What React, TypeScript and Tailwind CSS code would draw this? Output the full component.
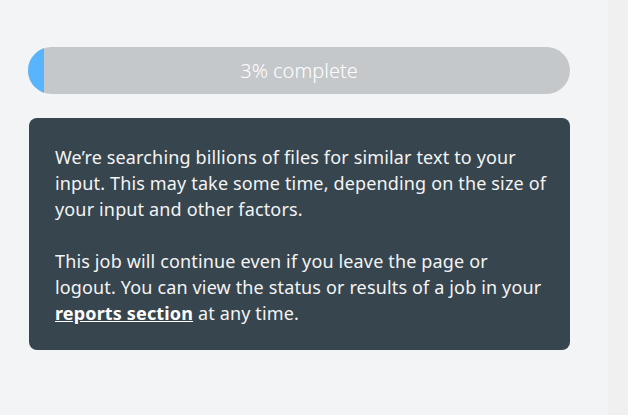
export default function App() {
  const pct = 3;
  return (
    <div className="flex h-[415px] w-[628px] bg-[#f0f0f1]" style={{ fontFamily: "'Noto Sans', Lato, sans-serif" }}>
      <div className="h-full w-[608px] bg-[#f3f4f6] pl-[28px] pr-[38px] pt-[47px]">
        <div className="relative flex h-[47px] w-[542px] items-center justify-center overflow-hidden rounded-full bg-[#c5c8ca]">
          <div className="absolute left-0 top-0 h-full bg-[#57b4fd]" style={{ width: `${pct}%` }} />
          <span className="relative text-[20px] font-light text-white">{pct}% complete</span>
        </div>
        <div className="mt-[24px] ml-px w-[541px] rounded-lg bg-[#37454e] px-[26px] pt-[26px] pb-[24px] text-[18px] leading-[26px] tracking-[0.15px] text-[#f4f4f4]">
          <p className="whitespace-nowrap">
            We’re searching billions of files for similar text to your
            <br />
            input. This may take some time, depending on the size of
            <br />
            your input and other factors.
          </p>
          <p className="mt-[26px] whitespace-nowrap">
            This job will continue even if you leave the page or
            <br />
            logout. You can view the status or results of a job in your
            <br />
            <a href="#" className="font-bold text-white underline">reports section</a> at any time.
          </p>
        </div>
      </div>
    </div>
  );
}
